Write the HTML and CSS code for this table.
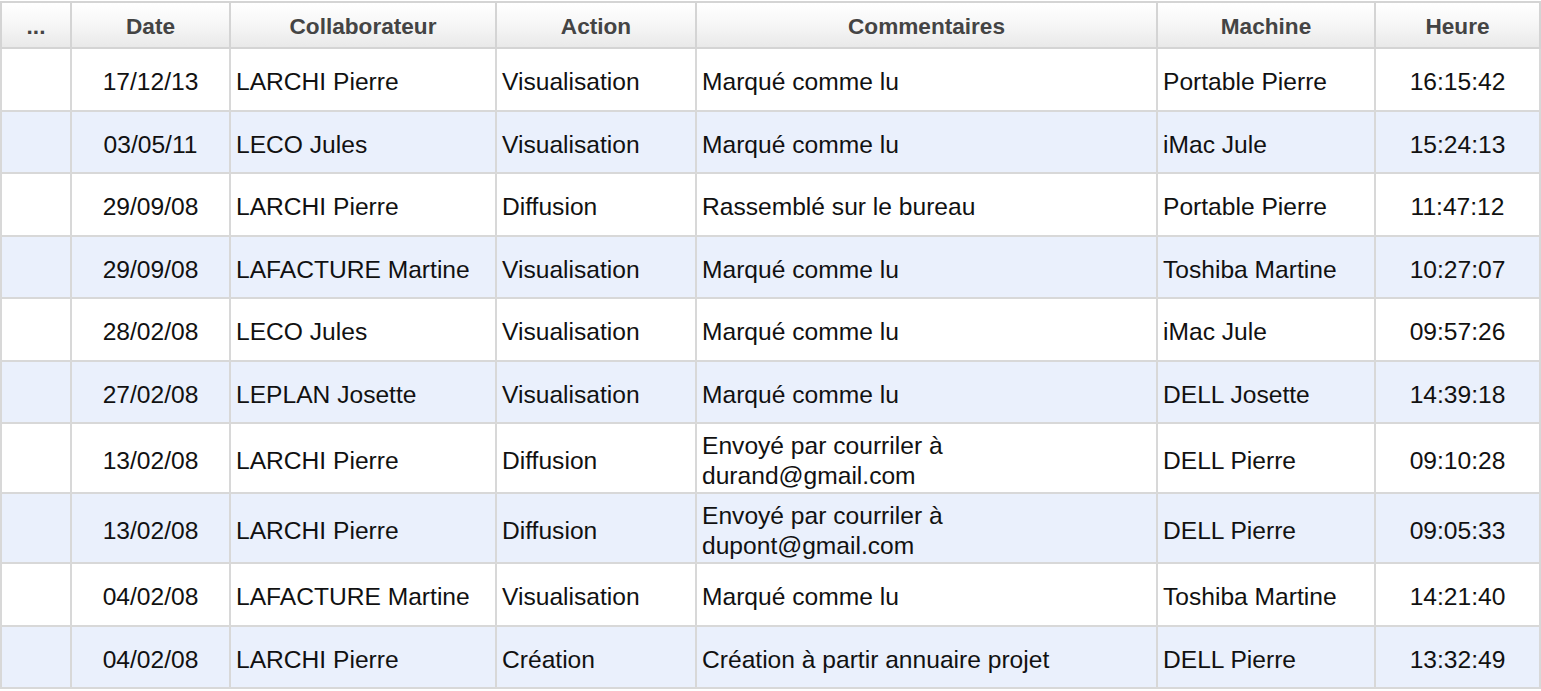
FILE: index.html
```html
<!DOCTYPE html>
<html lang="fr">
<head>
<meta charset="utf-8">
<title>Historique</title>
<link rel="stylesheet" href="styles.css">
</head>
<body>
<table class="grid">
  <colgroup>
    <col class="c-sel"><col class="c-date"><col class="c-collab"><col class="c-action"><col class="c-comment"><col class="c-machine"><col class="c-heure">
  </colgroup>
  <thead>
    <tr><th>...</th><th>Date</th><th>Collaborateur</th><th>Action</th><th>Commentaires</th><th>Machine</th><th>Heure</th></tr>
  </thead>
  <tbody>
    <tr><td></td><td class="ctr">17/12/13</td><td>LARCHI Pierre</td><td>Visualisation</td><td>Marqué comme lu</td><td>Portable Pierre</td><td class="ctr">16:15:42</td></tr>
    <tr><td></td><td class="ctr">03/05/11</td><td>LECO Jules</td><td>Visualisation</td><td>Marqué comme lu</td><td>iMac Jule</td><td class="ctr">15:24:13</td></tr>
    <tr><td></td><td class="ctr">29/09/08</td><td>LARCHI Pierre</td><td>Diffusion</td><td>Rassemblé sur le bureau</td><td>Portable Pierre</td><td class="ctr">11:47:12</td></tr>
    <tr><td></td><td class="ctr">29/09/08</td><td>LAFACTURE Martine</td><td>Visualisation</td><td>Marqué comme lu</td><td>Toshiba Martine</td><td class="ctr">10:27:07</td></tr>
    <tr><td></td><td class="ctr">28/02/08</td><td>LECO Jules</td><td>Visualisation</td><td>Marqué comme lu</td><td>iMac Jule</td><td class="ctr">09:57:26</td></tr>
    <tr><td></td><td class="ctr">27/02/08</td><td>LEPLAN Josette</td><td>Visualisation</td><td>Marqué comme lu</td><td>DELL Josette</td><td class="ctr">14:39:18</td></tr>
    <tr><td></td><td class="ctr">13/02/08</td><td>LARCHI Pierre</td><td>Diffusion</td><td>Envoyé par courriler à durand@gmail.com</td><td>DELL Pierre</td><td class="ctr">09:10:28</td></tr>
    <tr><td></td><td class="ctr">13/02/08</td><td>LARCHI Pierre</td><td>Diffusion</td><td>Envoyé par courriler à dupont@gmail.com</td><td>DELL Pierre</td><td class="ctr">09:05:33</td></tr>
    <tr><td></td><td class="ctr">04/02/08</td><td>LAFACTURE Martine</td><td>Visualisation</td><td>Marqué comme lu</td><td>Toshiba Martine</td><td class="ctr">14:21:40</td></tr>
    <tr><td></td><td class="ctr">04/02/08</td><td>LARCHI Pierre</td><td>Création</td><td>Création à partir annuaire projet</td><td>DELL Pierre</td><td class="ctr">13:32:49</td></tr>
  </tbody>
</table>
</body>
</html>
```

FILE: styles.css
```css
html, body {
  margin: 0;
  padding: 0;
  background: #ffffff;
}

body {
  padding: 1px 0 0 0;
  font-family: "Liberation Sans", Arial, sans-serif;
}

.grid {
  width: 1539px;
  border-collapse: collapse;
  table-layout: fixed;
  border: 2px solid #d4d4d4;
}

.c-sel { width: 70px; }
.c-date { width: 159px; }
.c-collab { width: 266px; }
.c-action { width: 200px; }
.c-comment { width: 461px; }
.c-machine { width: 218px; }
.c-heure { width: 165px; }

.grid th {
  height: 40px;
  padding: 4px 4px 0 4px;
  font-size: 22.6px;
  font-weight: bold;
  color: #444444;
  text-align: center;
  vertical-align: middle;
  background: linear-gradient(to bottom, #ffffff 0%, #f6f6f6 50%, #e9e9e9 100%);
  border: 2px solid #d4d4d4;
}

.grid td {
  height: 52.5px;
  padding: 7px 5px 1px 5px;
  font-size: 24.6px;
  line-height: 30px;
  color: #111111;
  text-align: left;
  vertical-align: middle;
  border: 2px solid #d8d8d8;
}

.grid tbody tr:nth-child(even) td {
  background: #eaf0fc;
}

.grid td.ctr {
  text-align: center;
}
```
